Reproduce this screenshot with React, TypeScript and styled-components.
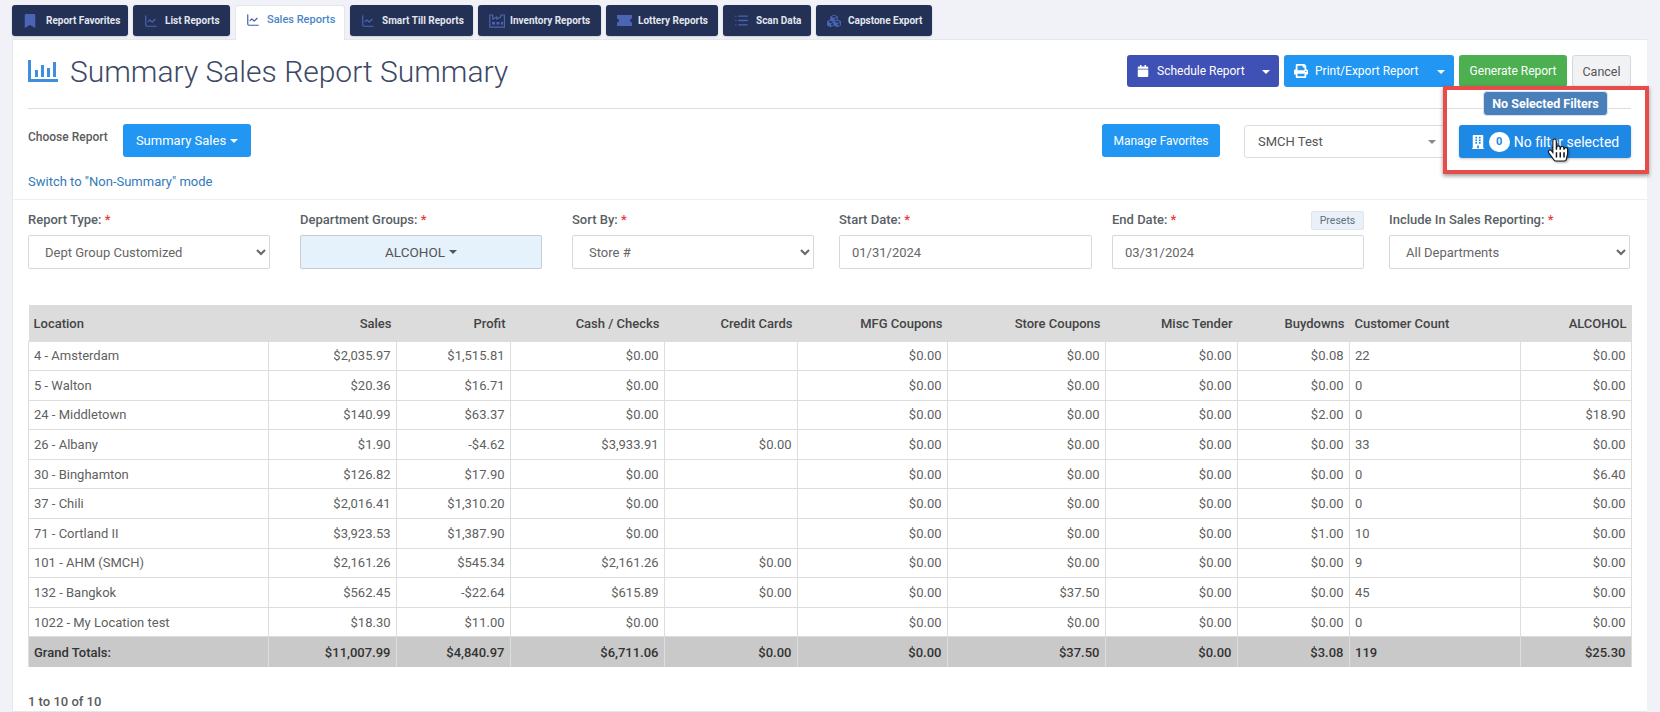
import { createGlobalStyle, styled } from "styled-components";
import type { ReactNode } from "react";
import { ChartLine, List } from "lucide-react";
import {
  FaBookmark,
  FaBuilding,
  FaCalendar,
  FaCubes,
  FaHandPointer,
  FaPrint,
} from "react-icons/fa";

const GlobalStyle = createGlobalStyle`
  html, body {
    margin: 0;
    height: 712px;
    overflow: hidden;
    background: #f1f2f7;
    font-family: Roboto, "Liberation Sans", sans-serif;
    color: #555;
  }
  * { box-sizing: border-box; }
`;

const Page = styled.div`
  padding: 5px 13px 0 12px;
  height: 712px;
  display: flex;
  flex-direction: column;
`;

const TabBar = styled.nav`
  display: flex;
  gap: 5px;
  height: 35px;
  position: relative;
  z-index: 1;
  margin-bottom: -1px;
`;

const Tab = styled.div<{ $active?: boolean; $width: number; $gap?: number }>`
  width: ${(p) => p.$width}px;
  height: ${(p) => (p.$active ? "35px" : "31px")};
  display: flex;
  align-items: ${(p) => (p.$active ? "flex-start" : "center")};
  padding: ${(p) => (p.$active ? "7px 0 0 10px" : "0 0 0 11px")};
  gap: ${(p) => p.$gap ?? 7}px;
  border-radius: ${(p) => (p.$active ? "3px 3px 0 0" : "3px")};
  background: ${(p) => (p.$active ? "#fff" : "#243156")};
  border: ${(p) => (p.$active ? "1px solid #e4e6ec" : "0")};
  border-bottom: 0;
  color: ${(p) => (p.$active ? "#4a86c5" : "#e3e6ee")};
  font-size: ${(p) => (p.$active ? "11px" : "10px")};
  font-weight: ${(p) => (p.$active ? 500 : 700)};
  white-space: nowrap;
  box-shadow: ${(p) => (p.$active ? "none" : "0 1px 2px rgba(0,0,0,.15)")};

  svg {
    flex: none;
    color: ${(p) => (p.$active ? "#3f5aa8" : "#4a65b4")};
  }
`;

const Panel = styled.main`
  position: relative;
  flex: 1;
  background: #fff;
  border: 1px solid #e6e7ec;
  border-right: 0;
`;

const TitleBar = styled.header`
  margin: 0 16px 0 15px;
  height: 69px;
  padding-top: 15px;
  display: flex;
  justify-content: space-between;
  align-items: flex-start;
  border-bottom: 1px solid #ddd;
`;

const TitleGroup = styled.div`
  display: flex;
  align-items: center;
  gap: 12px;
  height: 32px;
`;

const Title = styled.h1`
  margin: 0;
  font-size: 30px;
  font-weight: 300;
  color: #3d4865;
  white-space: nowrap;
`;

const ActionRow = styled.div`
  display: flex;
  gap: 5px;
  align-items: flex-start;
`;

const Button = styled.button<{ $bg: string; $width: number; $height?: number; $size?: number; $gap?: number }>`
  width: ${(p) => p.$width}px;
  height: ${(p) => p.$height ?? 32}px;
  border: 0;
  border-radius: 3px;
  background: ${(p) => p.$bg};
  color: #fff;
  font-family: inherit;
  font-size: ${(p) => p.$size ?? 12}px;
  padding: 0;
  display: flex;
  align-items: center;
  justify-content: center;
  gap: ${(p) => p.$gap ?? 8}px;
  white-space: nowrap;
`;

const SplitButton = styled(Button)`
  justify-content: flex-start;
  padding-left: 10px;
  position: relative;
  padding-right: 24px;
`;

const Caret = styled.span<{ $color?: string }>`
  display: inline-block;
  width: 0;
  height: 0;
  border-left: 4px solid transparent;
  border-right: 4px solid transparent;
  border-top: 4px solid ${(p) => p.$color ?? "#fff"};
`;

const SplitCaret = styled(Caret)`
  position: absolute;
  right: 9px;
  top: 15px;
`;

const CancelButton = styled.button`
  width: 59px;
  height: 32px;
  border: 1px solid #d5d8dc;
  border-radius: 3px;
  background: #f0f2f4;
  color: #555;
  font-family: inherit;
  font-size: 12.5px;
  padding: 0;
`;

const ReportBar = styled.section`
  padding: 15px 16px 0 15px;
  height: 91px;
  border-bottom: 1px solid #eeeff1;
`;

const ReportTop = styled.div`
  display: flex;
  align-items: flex-start;
`;

const ChooseLabel = styled.span`
  font-size: 12px;
  font-weight: 500;
  color: #5c5c5c;
  width: 95px;
  padding-top: 6px;
`;

const Spacer = styled.div`
  flex: 1;
`;

const StoreSelect = styled.div`
  width: 203px;
  height: 33px;
  margin: 1px 0 0 24px;
  border: 1px solid #ddd;
  border-radius: 3px;
  display: flex;
  align-items: center;
  justify-content: space-between;
  padding: 0 10px 0 13px;
  font-size: 13px;
  color: #555;
`;

const FilterButton = styled(Button)`
  margin: 1px 0 0 12px;
  gap: 4px;
  box-shadow: 0 1px 3px rgba(0, 0, 0, 0.2);
`;

const CountBadge = styled.span`
  width: 21px;
  height: 20px;
  border-radius: 10px;
  background: #fff;
  color: #1e88e5;
  font-size: 11px;
  font-weight: 700;
  display: flex;
  align-items: center;
  justify-content: center;
`;

const ModeLink = styled.a`
  display: block;
  margin-top: 16px;
  font-size: 13px;
  color: #337ab7;
`;

const Highlight = styled.div`
  position: absolute;
  left: 1430px;
  top: 46px;
  width: 206px;
  height: 88px;
  border: 4px solid #e64d4a;
  box-shadow: 0 2px 4px rgba(0, 0, 0, 0.4);
  pointer-events: none;
`;

const Tip = styled.div`
  position: absolute;
  left: 36px;
  top: 1px;
  width: 125px;
  height: 25px;
  border-radius: 4px;
  border: 1px solid #d8e3ef;
  background: #4a80ba;
  color: #fff;
  font-size: 12.5px;
  font-weight: 700;
  display: flex;
  align-items: center;
  justify-content: center;

  &::after {
    content: "";
    position: absolute;
    left: 56px;
    bottom: -6px;
    border-left: 5px solid transparent;
    border-right: 5px solid transparent;
    border-top: 5px solid #fff;
  }
`;

const Pointer = styled.div`
  position: absolute;
  left: 100px;
  top: 49px;
  filter: drop-shadow(1px 1px 1px rgba(0, 0, 0, 0.35));
  line-height: 0;

  svg {
    overflow: visible;
  }

  svg path {
    stroke: #111;
    stroke-width: 26px;
  }
`;

const FieldRow = styled.section`
  display: flex;
  padding: 12px 0 0 15px;
  height: 105px;
`;

const Field = styled.div<{ $width: number; $gap?: number }>`
  width: ${(p) => p.$width}px;
  margin-left: ${(p) => p.$gap ?? 0}px;
  flex: none;
`;

const LabelRow = styled.div`
  height: 23px;
  display: flex;
  justify-content: space-between;
  align-items: flex-start;
`;

const Label = styled.label`
  font-size: 13px;
  font-weight: 500;
  color: #5a5f66;
  line-height: 16px;
  white-space: nowrap;

  b {
    color: #e53935;
    font-weight: 500;
  }
`;

const Presets = styled.span`
  width: 53px;
  height: 19px;
  margin-top: -1px;
  border: 1px solid #dfe5ec;
  border-radius: 2px;
  background: #e9f0f8;
  color: #607080;
  font-size: 10.5px;
  display: flex;
  align-items: center;
  justify-content: center;
`;

const controlStyle = `
  width: 100%;
  height: 34px;
  border: 1px solid #d6d8da;
  border-radius: 2px;
  background-color: #fff;
  color: #666;
  font-family: inherit;
  font-size: 13px;
`;

const NativeSelect = styled.select`
  ${controlStyle}
  padding: 0 0 0 12px;
`;

const DateInput = styled.input`
  ${controlStyle}
  padding: 0 12px;
`;

const GroupButton = styled.div`
  ${controlStyle}
  background-color: #e5f1fb;
  border-color: #c6cdd3;
  display: flex;
  align-items: center;
  justify-content: center;
  gap: 4px;
  color: #555;
  font-size: 13.5px;
`;

const TableWrap = styled.div`
  padding: 0 16px 0 15px;
`;

const Table = styled.table`
  width: 1603px;
  border-collapse: collapse;
  table-layout: fixed;
  font-size: 13px;
`;

const Th = styled.th<{ $left?: boolean }>`
  height: 36px;
  padding: 1px 5px 0;
  background: #dcdcdc;
  color: #444;
  font-weight: 500;
  font-size: 13px;
  text-align: ${(p) => (p.$left ? "left" : "right")};
  white-space: nowrap;
`;

const Td = styled.td<{ $left?: boolean }>`
  height: 29.6px;
  padding: 0 5.5px 0 5px;
  border: 1px solid #ddd;
  color: #5f5f5f;
  text-align: ${(p) => (p.$left ? "left" : "right")};
  white-space: nowrap;
`;

const TotalCell = styled.td<{ $left?: boolean }>`
  height: 30px;
  padding: 0 5.5px 0 5px;
  background: #c9c9c9;
  border: 1px solid #ddd;
  border-width: 0 1px;
  color: #333;
  font-weight: 500;
  text-align: ${(p) => (p.$left ? "left" : "right")};
  white-space: nowrap;
`;

const PageInfo = styled.div`
  margin: 27px 0 0 15px;
  font-size: 13px;
  font-weight: 500;
  color: #5c5c5c;
`;

const ReportIcon = () => (
  <svg width="30" height="22" viewBox="0 0 30 22" fill="#3f90dc">
    <rect x="0" y="0" width="3" height="22" />
    <rect x="0" y="19" width="30" height="3" />
    <rect x="7" y="10" width="3" height="7" />
    <rect x="13" y="5" width="3" height="12" />
    <rect x="19" y="8" width="3" height="9" />
    <rect x="25" y="2" width="3" height="15" />
  </svg>
);

const InventoryIcon = () => (
  <svg width="16" height="14" viewBox="0 0 16 14" fill="none" stroke="currentColor" strokeWidth="1.2">
    <path d="M.8 13.2V1h3v4l4-2v2l4-2V1h3.6v12.2z" />
    <path d="M3 8h3v2.4H3zM7.5 8h3v2.4h-3zM12 8h2v2.4h-2z" fill="currentColor" stroke="none" />
  </svg>
);

const TicketIcon = () => (
  <svg width="15" height="11" viewBox="0 0 15 11" fill="currentColor">
    <path d="M0 0h15v3.6a1.9 1.9 0 0 0 0 3.8V11H0V7.4a1.9 1.9 0 0 0 0-3.8z" />
  </svg>
);

const tabs: { label: string; width: number; icon: ReactNode; active?: boolean; gap?: number }[] = [
  { label: "Report Favorites", width: 116, icon: <FaBookmark size={14} />, gap: 9 },
  { label: "List Reports", width: 97, icon: <ChartLine size={14} /> },
  { label: "Sales Reports", width: 110, icon: <ChartLine size={14} />, active: true },
  { label: "Smart Till Reports", width: 123, icon: <ChartLine size={14} /> },
  { label: "Inventory Reports", width: 123, icon: <InventoryIcon />, gap: 5 },
  { label: "Lottery Reports", width: 112, icon: <TicketIcon />, gap: 6 },
  { label: "Scan Data", width: 88, icon: <List size={15} strokeWidth={2.2} /> },
  { label: "Capstone Export", width: 116, icon: <FaCubes size={14} /> },
];

const columns = [
  { title: "Location", width: 240 },
  { title: "Sales", width: 128 },
  { title: "Profit", width: 114 },
  { title: "Cash / Checks", width: 154 },
  { title: "Credit Cards", width: 133 },
  { title: "MFG Coupons", width: 150 },
  { title: "Store Coupons", width: 158 },
  { title: "Misc Tender", width: 132 },
  { title: "Buydowns", width: 112 },
  { title: "Customer Count", width: 171 },
  { title: "ALCOHOL", width: 111 },
];

const Z = "$0.00";

const rows: string[][] = [
  ["4 - Amsterdam", "$2,035.97", "$1,515.81", Z, "", Z, Z, Z, "$0.08", "22", Z],
  ["5 - Walton", "$20.36", "$16.71", Z, "", Z, Z, Z, Z, "0", Z],
  ["24 - Middletown", "$140.99", "$63.37", Z, "", Z, Z, Z, "$2.00", "0", "$18.90"],
  ["26 - Albany", "$1.90", "-$4.62", "$3,933.91", Z, Z, Z, Z, Z, "33", Z],
  ["30 - Binghamton", "$126.82", "$17.90", Z, "", Z, Z, Z, Z, "0", "$6.40"],
  ["37 - Chili", "$2,016.41", "$1,310.20", Z, "", Z, Z, Z, Z, "0", Z],
  ["71 - Cortland II", "$3,923.53", "$1,387.90", Z, "", Z, Z, Z, "$1.00", "10", Z],
  ["101 - AHM (SMCH)", "$2,161.26", "$545.34", "$2,161.26", Z, Z, Z, Z, Z, "9", Z],
  ["132 - Bangkok", "$562.45", "-$22.64", "$615.89", Z, Z, "$37.50", Z, Z, "45", Z],
  ["1022 - My Location test", "$18.30", "$11.00", Z, "", Z, Z, Z, Z, "0", Z],
];

const totals = ["Grand Totals:", "$11,007.99", "$4,840.97", "$6,711.06", Z, Z, "$37.50", Z, "$3.08", "119", "$25.30"];

// first column and Customer Count read left aligned
const isLeft = (i: number) => i === 0 || i === 9;

export default function App() {
  return (
    <Page>
      <GlobalStyle />
      <TabBar>
        {tabs.map((t) => (
          <Tab key={t.label} $active={t.active} $width={t.width} $gap={t.gap}>
            {t.icon}
            {t.label}
          </Tab>
        ))}
      </TabBar>
      <Panel>
        <TitleBar>
          <TitleGroup>
            <ReportIcon />
            <Title>Summary Sales Report Summary</Title>
          </TitleGroup>
          <ActionRow>
            <SplitButton $bg="#3f51b5" $width={152}>
              <FaCalendar size={12} />
              Schedule Report
              <SplitCaret />
            </SplitButton>
            <SplitButton $bg="#2196f3" $width={170} $gap={7}>
              <FaPrint size={14} />
              Print/Export Report
              <SplitCaret />
            </SplitButton>
            <Button $bg="#4caf50" $width={108}>Generate Report</Button>
            <CancelButton>Cancel</CancelButton>
          </ActionRow>
        </TitleBar>

        <ReportBar>
          <ReportTop>
            <ChooseLabel>Choose Report</ChooseLabel>
            <Button $bg="#2196f3" $width={128} $height={33} $size={13} $gap={4}>
              Summary Sales <Caret />
            </Button>
            <Spacer />
            <Button $bg="#2196f3" $width={118} $height={33}>Manage Favorites</Button>
            <StoreSelect>
              SMCH Test
              <Caret $color="#888" />
            </StoreSelect>
            <FilterButton $bg="#1e88e5" $width={172} $height={33} $size={14}>
              <FaBuilding size={14} />
              <CountBadge>0</CountBadge>
              No filter selected
            </FilterButton>
          </ReportTop>
          <ModeLink>Switch to "Non-Summary" mode</ModeLink>
        </ReportBar>

        <FieldRow>
          <Field $width={242}>
            <LabelRow>
              <Label>Report Type: <b>*</b></Label>
            </LabelRow>
            <NativeSelect defaultValue="Dept Group Customized">
              <option>Dept Group Customized</option>
            </NativeSelect>
          </Field>
          <Field $width={242} $gap={30}>
            <LabelRow>
              <Label>Department Groups: <b>*</b></Label>
            </LabelRow>
            <GroupButton>ALCOHOL <Caret $color="#555" /></GroupButton>
          </Field>
          <Field $width={242} $gap={30}>
            <LabelRow>
              <Label>Sort By: <b>*</b></Label>
            </LabelRow>
            <NativeSelect defaultValue="Store #">
              <option>Store #</option>
            </NativeSelect>
          </Field>
          <Field $width={253} $gap={25}>
            <LabelRow>
              <Label>Start Date: <b>*</b></Label>
            </LabelRow>
            <DateInput readOnly value="01/31/2024" />
          </Field>
          <Field $width={252} $gap={20}>
            <LabelRow>
              <Label>End Date: <b>*</b></Label>
              <Presets>Presets</Presets>
            </LabelRow>
            <DateInput readOnly value="03/31/2024" />
          </Field>
          <Field $width={241} $gap={25}>
            <LabelRow>
              <Label>Include In Sales Reporting: <b>*</b></Label>
            </LabelRow>
            <NativeSelect defaultValue="All Departments">
              <option>All Departments</option>
            </NativeSelect>
          </Field>
        </FieldRow>

        <TableWrap>
          <Table>
            <colgroup>
              {columns.map((c) => (
                <col key={c.title} style={{ width: c.width }} />
              ))}
            </colgroup>
            <thead>
              <tr>
                {columns.map((c, i) => (
                  <Th key={c.title} $left={isLeft(i)}>{c.title}</Th>
                ))}
              </tr>
            </thead>
            <tbody>
              {rows.map((r) => (
                <tr key={r[0]}>
                  {r.map((v, i) => (
                    <Td key={i} $left={isLeft(i)}>{v}</Td>
                  ))}
                </tr>
              ))}
              <tr>
                {totals.map((v, i) => (
                  <TotalCell key={i} $left={isLeft(i)}>{v}</TotalCell>
                ))}
              </tr>
            </tbody>
          </Table>
        </TableWrap>
        <PageInfo>1 to 10 of 10</PageInfo>

        <Highlight>
          <Tip>No Selected Filters</Tip>
          <Pointer>
            <FaHandPointer size={22} color="#fff" />
          </Pointer>
        </Highlight>
      </Panel>
    </Page>
  );
}
